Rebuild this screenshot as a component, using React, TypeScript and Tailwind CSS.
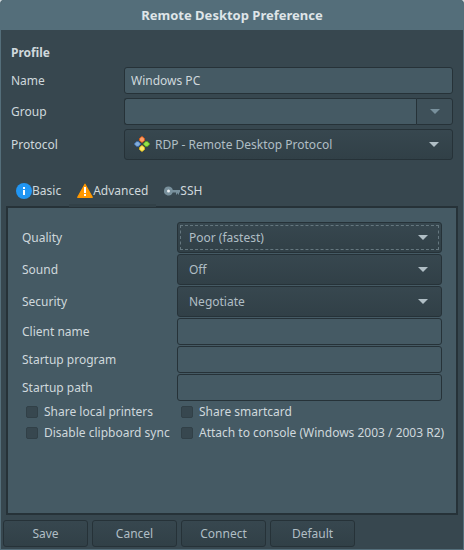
import React, { useState } from 'react';

type TabId = 'basic' | 'advanced' | 'ssh';

const fieldClass =
  'h-[27px] w-full min-w-0 border border-[#263238] bg-[#455a64] px-1.5 text-[12px] text-[#cfd8dc] outline-none';

const buttonClass =
  'border border-[#263238] bg-linear-to-b from-[#37474f] to-[#314047] text-[12px] text-[#b0bec5]';

const Arrow: React.FC<{ className: string }> = ({ className }) => (
  <svg className={className} width="10" height="5" viewBox="0 0 10 5" aria-hidden="true">
    <path d="M0 0h10L5 5z" fill="currentColor" />
  </svg>
);

const InfoIcon: React.FC = () => (
  <svg width="16" height="16" viewBox="0 0 16 16" aria-hidden="true">
    <circle cx="8" cy="8" r="8" fill="#2196f3" />
    <path d="M7 4h2v2H7zM7 7h2v5H7z" fill="#fff" />
  </svg>
);

const WarningIcon: React.FC = () => (
  <svg width="16" height="16" viewBox="0 0 16 16" aria-hidden="true">
    <path d="M8 1.2 15.3 14.3H.7z" fill="#ff9800" stroke="#ff9800" strokeWidth="1.2" strokeLinejoin="round" />
    <path d="M7 4h2v6H7zM7 11h2v2H7z" fill="#fff" />
  </svg>
);

const KeyIcon: React.FC = () => (
  <svg width="16" height="16" viewBox="0 0 16 16" aria-hidden="true">
    <path
      d="M4.500 3.500a4.500 4.500 0 1 0 4.200 6H12v2h1v-1h1v1h1v-2h1V7H8.800a4.500 4.500 0 0 0-4.300-3.500z"
      fill="#78909c"
    />
    <circle cx="4.500" cy="8" r="1.500" fill="#eceff1" />
  </svg>
);

const RdpIcon: React.FC<{ className: string }> = ({ className }) => (
  <svg className={className} width="16" height="16" viewBox="0 0 16 16" strokeLinejoin="round" aria-hidden="true">
    <path d="M7.500.7h1l2 2v1.600l-2 2h-1l-2-2V2.700z" fill="#ff9d66" stroke="#dd5a14" />
    <path d="M2.700 5.500h1.600l2 2v1l-2 2H2.700l-2-2v-1z" fill="#82aedb" stroke="#3d6cab" />
    <path d="M11.700 5.500h1.600l2 2v1l-2 2h-1.600l-2-2v-1z" fill="#95e34c" stroke="#5aa51a" />
    <path d="M7.500 9.700h1l2 2v1.600l-2 2h-1l-2-2v-1.600z" fill="#fdec6a" stroke="#d8b416" />
  </svg>
);

interface SelectProps {
  id: string;
  options: string[];
  focused?: boolean;
  icon?: boolean;
}

const Select: React.FC<SelectProps> = ({ id, options, focused, icon }) => (
  <div className="relative">
    <select
      id={id}
      className={`${buttonClass} block h-[31px] w-full appearance-none rounded-[3px] ${
        icon ? 'pl-[30px]' : 'pl-[11px]'
      } ${focused ? 'outline-1 -outline-offset-4 outline-dashed outline-[#65777f]' : 'outline-none'}`}
    >
      {options.map((option) => (
        <option key={option}>{option}</option>
      ))}
    </select>
    {icon && <RdpIcon className="pointer-events-none absolute top-[7px] left-2.5" />}
    <Arrow className="pointer-events-none absolute top-[13px] right-3.5 text-[#b0bec5]" />
  </div>
);

const tabs: { id: TabId; label: string; icon: React.ReactNode }[] = [
  { id: 'basic', label: 'Basic', icon: <InfoIcon /> },
  { id: 'advanced', label: 'Advanced', icon: <WarningIcon /> },
  { id: 'ssh', label: 'SSH', icon: <KeyIcon /> },
];

const selects = [
  { id: 'quality', label: 'Quality', options: ['Poor (fastest)', 'Medium', 'Good', 'Best (slowest)'] },
  { id: 'sound', label: 'Sound', options: ['Off', 'Local', 'Remote'] },
  { id: 'security', label: 'Security', options: ['Negotiate', 'RDP', 'TLS', 'NLA'] },
];

const textFields = [
  { id: 'client-name', label: 'Client name' },
  { id: 'startup-program', label: 'Startup program' },
  { id: 'startup-path', label: 'Startup path' },
];

const checks = [
  'Share local printers',
  'Share smartcard',
  'Disable clipboard sync',
  'Attach to console (Windows 2003 / 2003 R2)',
];

const App: React.FC = () => {
  const [activeTab, setActiveTab] = useState<TabId>('advanced');

  return (
    <div className="bg-[#cfd8dc]">
      <div className="flex min-h-screen flex-col overflow-hidden rounded-t-[4px] border border-t-0 border-[#546e7a] bg-[#37474f] font-['Noto_Sans',sans-serif] text-[12px] leading-4 text-[#cfd8dc]">
        <header className="flex h-[30px] items-center justify-center bg-[#546e7a]">
          <h1 className="text-[13px] font-bold text-[#dfe5e8]">Remote Desktop Preference</h1>
        </header>

        <section className="px-2.5 pt-[15px]">
          <h2 className="mb-1.5 font-bold">Profile</h2>
          <div className="grid grid-cols-[113px_1fr] items-center gap-y-1">
            <label htmlFor="name">Name</label>
            <input id="name" type="text" defaultValue="Windows PC" className={`${fieldClass} rounded-[3px]`} />
            <label htmlFor="group">Group</label>
            <div className="flex">
              <input id="group" type="text" className={`${fieldClass} flex-1 rounded-l-[3px] border-r-0`} />
              <button
                type="button"
                aria-label="Show groups"
                className="flex h-[27px] w-[37px] items-center justify-center rounded-r-[3px] border border-[#263238] bg-[#3e5059] text-[#78909c]"
              >
                <Arrow className="block" />
              </button>
            </div>
            <label htmlFor="protocol">Protocol</label>
            <Select
              id="protocol"
              icon
              options={['RDP - Remote Desktop Protocol', 'VNC - Virtual Network Computing', 'SSH - Secure Shell']}
            />
          </div>
        </section>

        <div role="tablist" className="relative z-10 mt-[15px] flex px-[7px]">
          {tabs.map((tab) => (
            <button
              key={tab.id}
              type="button"
              role="tab"
              aria-selected={activeTab === tab.id}
              onClick={() => setActiveTab(tab.id)}
              className={`relative flex h-[31px] items-center px-2 ${
                activeTab === tab.id
                  ? 'after:absolute after:inset-x-0 after:-bottom-px after:h-[3px] after:bg-[#324148]'
                  : ''
              }`}
            >
              {tab.icon}
              {tab.label}
            </button>
          ))}
        </div>

        <main className="mx-[5px] flex-1 border-2 border-[#263238] bg-[#455a64] p-3.5">
          <div className="grid grid-cols-[155px_1fr] items-center gap-y-px">
            {selects.map((item) => (
              <React.Fragment key={item.id}>
                <label htmlFor={item.id}>{item.label}</label>
                <Select id={item.id} options={item.options} focused={item.id === 'quality'} />
              </React.Fragment>
            ))}
            {textFields.map((item) => (
              <React.Fragment key={item.id}>
                <label htmlFor={item.id}>{item.label}</label>
                <input id={item.id} type="text" className={`${fieldClass} rounded-[3px]`} />
              </React.Fragment>
            ))}
          </div>
          <div className="grid grid-cols-[155px_1fr]">
            {checks.map((label) => (
              <label key={label} className="flex h-[21px] items-center gap-1.5 pl-1 whitespace-nowrap">
                <input
                  type="checkbox"
                  className="size-3 appearance-none rounded-[2px] border border-[#314047] bg-[#37474f] checked:bg-[#78909c]"
                />
                {label}
              </label>
            ))}
          </div>
        </main>

        <footer className="flex gap-1 px-0.5 pt-[5px] pb-0.5">
          {['Save', 'Cancel', 'Connect', 'Default'].map((label) => (
            <button key={label} type="button" className={`${buttonClass} h-[27px] w-[85px] rounded-[3px]`}>
              {label}
            </button>
          ))}
        </footer>
      </div>
    </div>
  );
};

export default App;
